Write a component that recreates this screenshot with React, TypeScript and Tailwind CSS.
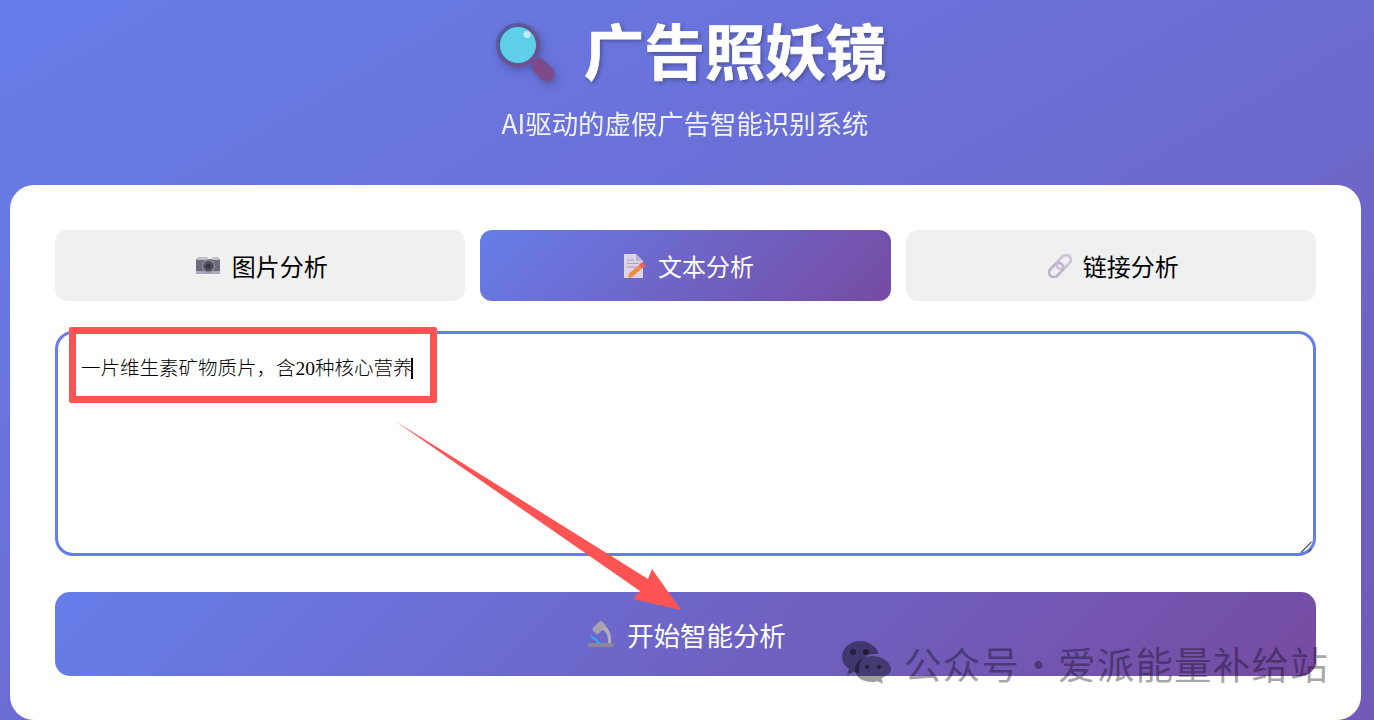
import React from "react";

const cjk = { fontFamily: '"Noto Sans CJK SC", "Noto Sans", sans-serif' };

function Magnifier() {
  return (
    <svg width="64" height="64" viewBox="0 0 64 64" className="relative top-[3px] drop-shadow-[2px_3px_4px_rgba(0,0,0,0.25)]">
      <defs>
        <linearGradient id="rim" x1="0" y1="0" x2="1" y2="1">
          <stop offset="0" stopColor="#4d5f9f" />
          <stop offset="1" stopColor="#7a4a8c" />
        </linearGradient>
      </defs>
      <path d="M39 42 L42 39 L47 42 L39 47 Z" fill="#5d3f7f" />
      <line x1="45" y1="46" x2="53" y2="54" stroke="#7f4a88" strokeWidth="15" strokeLinecap="round" />
      <circle cx="24" cy="25" r="20" fill="#5fd0ea" stroke="url(#rim)" strokeWidth="4" />
      <circle cx="33" cy="14.5" r="3.5" fill="#d5eef7" opacity="0.85" />
    </svg>
  );
}

function Camera() {
  return (
    <svg width="24" height="17" viewBox="0 0 24 17">
      <rect x="0" y="2" width="24" height="15" rx="1" fill="#6f6a7c" />
      <rect x="1" y="0" width="11" height="3" rx="1" fill="#c4c0c8" />
      <rect x="16" y="0" width="7" height="3" rx="1" fill="#c4c0c8" />
      <rect x="0" y="14" width="24" height="3" fill="#ada5bd" />
      <circle cx="12.5" cy="9" r="6" fill="#55505f" stroke="#8f899c" strokeWidth="1.4" />
      <circle cx="12.5" cy="9" r="2.6" fill="#38343f" />
    </svg>
  );
}

function Memo() {
  return (
    <svg width="22" height="24" viewBox="0 0 22 24">
      <path d="M0 0 H12 L19 7 V24 H0 Z" fill="#dcd3e6" />
      <path d="M12 0 L19 7 H12 Z" fill="#bdb2cd" />
      <path d="M3 6 H10 M3 9.5 H15 M3 13 H12" stroke="#a99ebd" strokeWidth="1.2" />
      <path d="M4 24 L5 19.5 L15 11 L18 14.5 L8 23 Z" fill="#f08a3c" />
      <path d="M15 11 L18 8 L22 12 L18 14.5 Z" fill="#ee5f5b" />
    </svg>
  );
}

function LinkIcon() {
  return (
    <svg width="24" height="24" viewBox="0 0 24 24" fill="none" stroke="#d2c9df" strokeWidth="2.8">
      <rect x="11" y="0" width="9.5" height="16" rx="4.7" transform="rotate(45 15.75 8)" stroke="#cdc3db" />
      <rect x="3.5" y="8" width="9.5" height="16" rx="4.7" transform="rotate(45 8.25 16)" stroke="#bfb4d0" />
    </svg>
  );
}

function Microscope() {
  return (
    <svg width="26" height="26" viewBox="0 0 26 26">
      <rect x="0" y="22" width="25.5" height="4" rx="1.5" fill="#8c8696" />
      <path d="M16 4 Q24 9 23 22 H20 Q21 11 13 8 Z" fill="#b3aeb9" />
      <rect x="7" y="0" width="8" height="13" rx="2.5" transform="rotate(45 11 6.5)" fill="#a6a1ac" />
      <path d="M3 15 L13 23" stroke="#3aa7ee" strokeWidth="2.2" />
    </svg>
  );
}

function Wechat() {
  const bubble = "M31 15 C21 15 14 21 14 28.5 C14 36 21 41 31 41 C33 41 35 41 36 40 L42 42.5 L40.5 37.5 C45 35 50 32.5 50 28.5 C50 21 41 15 31 15 Z";
  return (
    <svg width="52" height="44" viewBox="0 0 52 44" className="shrink-0">
      <defs>
        <mask id="cut">
          <rect width="52" height="44" fill="white" />
          <path d="M33 13 C21 13 17 21 17 28.5 C17 36 23 43 33 43 L52 43 V13 Z" fill="black" />
        </mask>
      </defs>
      <path
        d="M18 0 C8 0 0 7 0 16 C0 21 3 25 7 28 L5 34 L12 31 C14 32 16 32 18 32 C29 32 37 25 37 16 C37 7 28 0 18 0 Z"
        fill="rgba(0,0,0,0.42)"
        mask="url(#cut)"
      />
      <path d={bubble} transform="translate(-1 0)" fill="rgba(0,0,0,0.38)" />
      <circle cx="11" cy="11" r="3" fill="rgba(0,0,0,0.45)" />
      <circle cx="24" cy="11" r="3" fill="rgba(0,0,0,0.45)" />
      <circle cx="25" cy="26" r="2.2" fill="rgba(0,0,0,0.45)" />
      <circle cx="37" cy="26" r="2.2" fill="rgba(0,0,0,0.45)" />
    </svg>
  );
}

export default function App() {
  return (
    <div
      className="relative h-[720px] overflow-hidden bg-[linear-gradient(150deg,#667eea_0%,#764ba2_100%)] bg-[length:100%_1343px] bg-no-repeat px-[10px]"
      style={cjk}
    >
      <header className="flex h-[185px] flex-col items-center text-white">
        <h1 className="mt-[4px] flex h-[90px] items-center gap-[26px] pl-[6px] text-[60.5px] font-bold [-webkit-text-stroke:0.7px_white] [text-shadow:2px_2px_4px_rgba(0,0,0,0.3)]">
          <Magnifier />
          <span>广告照妖镜</span>
        </h1>
        <p className="mt-[11px] pr-[4px] text-[26.4px] leading-[36px] opacity-90">AI驱动的虚假广告智能识别系统</p>
      </header>

      <main className="flex h-[535px] w-[1351px] flex-col rounded-[24px] bg-white px-[45px] pt-[45px]">
        <div className="grid grid-cols-3 gap-[15px]">
          <button className="flex h-[71px] items-center justify-center gap-[12px] rounded-[12px] bg-[#f0f0f0] pl-[3px] text-[24px] text-black">
            <Camera />
            图片分析
          </button>
          <button className="flex h-[71px] items-center justify-center gap-[12px] rounded-[12px] bg-[linear-gradient(135deg,#667eea,#764ba2)] pl-[7px] text-[24px] text-white">
            <Memo />
            文本分析
          </button>
          <button className="flex h-[71px] items-center justify-center gap-[11px] rounded-[12px] bg-[#f0f0f0] pl-[5px] text-[24px] text-black">
            <LinkIcon />
            链接分析
          </button>
        </div>

        <div className="relative mt-[30px]">
          <textarea
            readOnly
            defaultValue="一片维生素矿物质片，含20种核心营养"
            className="block h-[225px] w-full resize-none rounded-[18px] border-[3px] border-[#667eea] px-[23px] pt-[21px] pb-[19px] text-[19.5px] leading-[28px] text-black outline-none"
            style={{ fontFamily: '"Liberation Serif", "Noto Sans CJK SC", serif', fontWeight: 300 }}
          />
          {/* resize grip */}
          <svg className="absolute bottom-[3px] right-[4px]" width="12" height="12" viewBox="0 0 12 12">
            <path d="M1 11.5 L11.5 1" stroke="#555" strokeWidth="1.2" />
            <path d="M8 11.5 L11.5 8" stroke="#555" strokeWidth="1.2" />
          </svg>
        </div>

        <button className="mt-[36px] flex h-[84px] w-full items-center justify-center gap-[13px] rounded-[15px] bg-[linear-gradient(135deg,#667eea,#764ba2)] pl-[3px] text-[26.4px] text-white">
          <Microscope />
          <span className="relative top-[1px]">开始智能分析</span>
        </button>
      </main>

      {/* caret */}
      <div className="absolute left-[411px] top-[358px] h-[21px] w-[2px] bg-black" />

      {/* annotation rectangle */}
      <div className="absolute left-[69px] top-[327px] h-[76px] w-[368px] rounded-[2px] border-[7px] border-[#fe5353]" />

      {/* annotation arrow */}
      <svg className="absolute left-0 top-0" width="1374" height="720" viewBox="0 0 1374 720">
        <path d="M395 421 L648 579 L652 569 L681 610 L633 599 L640 591 Z" fill="#fe5353" />
      </svg>

      {/* watermark */}
      <div className="absolute left-[842px] top-[641px] flex items-center gap-[10px]">
        <Wechat />
        <span className="whitespace-nowrap text-[37.5px] leading-[44px] tracking-[1.2px] text-[rgba(0,0,0,0.37)] [word-spacing:-10px]">公众号 · 爱派能量补给站</span>
      </div>
    </div>
  );
}
